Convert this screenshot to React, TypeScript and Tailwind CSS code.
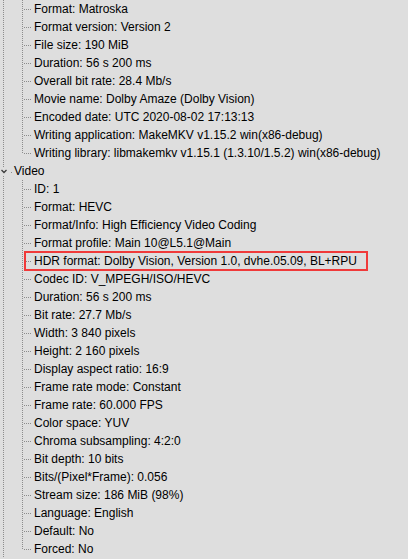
import React from "react";

type Row = { text: string; kind: "child" | "last" | "section"; highlight?: boolean };

const rows: Row[] = [
  { text: "Format: Matroska", kind: "child" },
  { text: "Format version: Version 2", kind: "child" },
  { text: "File size: 190 MiB", kind: "child" },
  { text: "Duration: 56 s 200 ms", kind: "child" },
  { text: "Overall bit rate: 28.4 Mb/s", kind: "child" },
  { text: "Movie name: Dolby Amaze (Dolby Vision)", kind: "child" },
  { text: "Encoded date: UTC 2020-08-02 17:13:13", kind: "child" },
  { text: "Writing application: MakeMKV v1.15.2 win(x86-debug)", kind: "child" },
  { text: "Writing library: libmakemkv v1.15.1 (1.3.10/1.5.2) win(x86-debug)", kind: "last" },
  { text: "Video", kind: "section" },
  { text: "ID: 1", kind: "child" },
  { text: "Format: HEVC", kind: "child" },
  { text: "Format/Info: High Efficiency Video Coding", kind: "child" },
  { text: "Format profile: Main 10@L5.1@Main", kind: "child" },
  { text: "HDR format: Dolby Vision, Version 1.0, dvhe.05.09, BL+RPU", kind: "child", highlight: true },
  { text: "Codec ID: V_MPEGH/ISO/HEVC", kind: "child" },
  { text: "Duration: 56 s 200 ms", kind: "child" },
  { text: "Bit rate: 27.7 Mb/s", kind: "child" },
  { text: "Width: 3 840 pixels", kind: "child" },
  { text: "Height: 2 160 pixels", kind: "child" },
  { text: "Display aspect ratio: 16:9", kind: "child" },
  { text: "Frame rate mode: Constant", kind: "child" },
  { text: "Frame rate: 60.000 FPS", kind: "child" },
  { text: "Color space: YUV", kind: "child" },
  { text: "Chroma subsampling: 4:2:0", kind: "child" },
  { text: "Bit depth: 10 bits", kind: "child" },
  { text: "Bits/(Pixel*Frame): 0.056", kind: "child" },
  { text: "Stream size: 186 MiB (98%)", kind: "child" },
  { text: "Language: English", kind: "child" },
  { text: "Default: No", kind: "child" },
  { text: "Forced: No", kind: "last" },
];

const DOT = "#8c8c8c";

function ChildLines({ last }: { last: boolean }) {
  const dots: React.ReactNode[] = [];
  for (let y = 0; y < 18; y += 2) {
    dots.push(<rect key={"a" + y} x={3} y={y} width={1} height={1} fill={DOT} />);
    if (!last || y <= 8) dots.push(<rect key={"b" + y} x={22} y={y} width={1} height={1} fill={DOT} />);
  }
  for (let x = 24; x <= 30; x += 2) {
    dots.push(<rect key={"h" + x} x={x} y={9} width={1} height={1} fill={DOT} />);
  }
  return (
    <svg width={34} height={18} className="shrink-0 block">
      {dots}
    </svg>
  );
}

function SectionLines() {
  const dots: React.ReactNode[] = [];
  for (let y = 0; y < 18; y += 2) {
    if (y < 6 || y > 12) dots.push(<rect key={"a" + y} x={3} y={y} width={1} height={1} fill={DOT} />);
  }
  return (
    <svg width={14} height={18} className="shrink-0 block">
      {dots}
      <polyline points="1.5,8 4,10.5 6.5,8" fill="none" stroke="#3a3a3a" strokeWidth={1.3} />
      <rect x={11} y={10} width={1} height={1} fill={DOT} />
    </svg>
  );
}

export default function App() {
  return (
    <div
      className="w-[408px] h-[559px] overflow-hidden bg-[#dedede] text-black text-[12px]"
      style={{ fontFamily: '"Liberation Sans", Arial, sans-serif' }}
    >
      {rows.map((r, i) => (
        <div key={i} className="relative flex h-[18px] items-center whitespace-nowrap leading-[18px]">
          {r.kind === "section" ? <SectionLines /> : <ChildLines last={r.kind === "last"} />}
          <span>{r.text}</span>
          {r.highlight && (
            <div className="absolute left-[24px] top-[-1px] w-[344px] h-[20px] border-2 border-[#f03a3a]" />
          )}
        </div>
      ))}
    </div>
  );
}
